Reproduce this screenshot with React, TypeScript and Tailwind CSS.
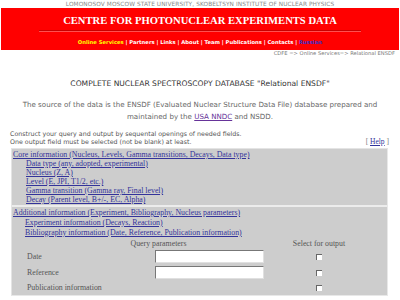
import React from "react";

export default function App() {
  const link = "text-[#33339a] underline decoration-[0.5px] underline-offset-[1px]";
  const inputCls =
    "w-[109px] h-[13px] bg-white border border-t-[#777] border-l-[#777] border-r-[#e0e0e0] border-b-[#e0e0e0] outline-none";
  const box = "w-[6px] h-[6px] bg-white border-t border-l border-t-[#666] border-l-[#666]";
  return (
    <div className="w-[400px] h-[300px] overflow-hidden bg-white flex flex-col">
      <div className="h-[8px] text-center text-[5.8px] leading-[8px] text-[#8a8a8a] [font-family:'DejaVu_Sans',sans-serif] tracking-[0.1px] whitespace-nowrap">
        LOMONOSOV MOSCOW STATE UNIVERSITY, SKOBELTSYN INSTITUTE OF NUCLEAR PHYSICS
      </div>
      <div className="mx-[1px] h-[42px] bg-[#ff0000] flex flex-col items-center">
        <div className="pt-[7px] text-[10.6px] leading-[12px] font-bold text-white [font-family:'Liberation_Serif',serif]">
          CENTRE FOR PHOTONUCLEAR EXPERIMENTS DATA
        </div>
        <div className="mt-[3px] w-[322px] h-[2px] border-t border-t-[#c80000] border-b border-b-[#ff5050]" />
        <div className="mt-[6px] text-[5.25px] leading-[8px] font-bold text-white [font-family:'DejaVu_Sans',sans-serif] whitespace-nowrap">
          <span className="text-[#ffff00]">Online Services</span>
          {" | Partners | Links | About | Team | Publications | Contacts | "}
          <span className="text-[#3333cc]">Russian</span>
        </div>
      </div>
      <div className="h-[7px] text-right pr-[5px] text-[5.2px] leading-[7px] text-[#777] [font-family:'DejaVu_Sans',sans-serif] whitespace-nowrap">
        CDFE =&gt; Online Services=&gt; Relational ENSDF
      </div>
      <div className="mt-[23px] text-center text-[7.6px] leading-[8px] text-[#333] [font-family:'DejaVu_Sans',sans-serif] whitespace-nowrap">
        COMPLETE NUCLEAR SPECTROSCOPY DATABASE "Relational ENSDF"
      </div>
      <div className="mt-[11px] text-center text-[7.1px] leading-[12px] text-[#666] [font-family:'DejaVu_Sans',sans-serif] whitespace-nowrap">
        The source of the data is the ENSDF (Evaluated Nuclear Structure Data File) database prepared and
        <br />
        maintained by the <span className="text-[#663399] underline">USA NNDC</span> and NSDD.
      </div>
      <div className="mt-[7px] mx-[10px] flex items-end justify-between">
        <div className="text-[6.3px] leading-[8px] text-[#555] [font-family:'DejaVu_Sans',sans-serif] whitespace-nowrap">
          Construct your query and output by sequental openings of needed fields.
          <br />
          One output field must be selected (not be blank) at least.
        </div>
        <div className="text-[7.5px] leading-[8px] text-[#777] [font-family:'Liberation_Serif',serif] mr-[1px]">
          [ <span className="text-[#33339a] underline">Help</span> ]
        </div>
      </div>
      <div className="mt-[2px] ml-[11px] w-[377px] h-[148px] bg-[#cdcdcd] border border-t-[#e4e4e4] border-l-[#e4e4e4] border-r-[#e8e8e8] border-b-[#e8e8e8] [font-family:'Liberation_Serif',serif] text-[7.85px] whitespace-nowrap">
        <div className="h-[56px] pt-[1px] pl-[1px] leading-[9px]">
          <div><span className={link}>Core information (Nucleus, Levels, Gamma transitions, Decays, Data type)</span></div>
          <div className="pl-[13px] flex flex-col">
            <span><span className={link}>Data type (any, adopted, experimental)</span></span>
            <span><span className={link}>Nucleus (Z, A)</span></span>
            <span><span className={link}>Level (E, JPI, T1/2, etc.)</span></span>
            <span><span className={link}>Gamma transition (Gamma ray, Final level)</span></span>
            <span><span className={link}>Decay (Parent level, B+/-, EC, Alpha)</span></span>
          </div>
        </div>
        <div className="h-[2px] bg-[#ececec]" />
        <div className="pt-[1px] pl-[1px] leading-[10px]">
          <div><span className={link}>Additional information (Experiment, Bibliography, Nucleus parameters)</span></div>
          <div className="pl-[12px] flex flex-col">
            <span><span className={link}>Experiment information (Decays, Reaction)</span></span>
            <span><span className={link}>Bibliography information (Date, Reference, Publication information)</span></span>
          </div>
          <div className="grid grid-cols-[128px_109px_26px_58px] pl-[14px] text-[#555] mt-[1px]">
            <div className="col-span-3 text-center leading-[10px]">Query parameters</div>
            <div className="text-center leading-[10px]">Select for output</div>

            <div className="h-[16px] flex items-center">Date</div>
            <div className="h-[16px] flex items-start pt-[1px]">
              <input className={inputCls} />
            </div>
            <div />
            <div className="h-[16px] flex items-center justify-center">
              <div className={box} />
            </div>

            <div className="h-[16px] flex items-center">Reference</div>
            <div className="h-[16px] flex items-start pt-[1px]">
              <input className={inputCls} />
            </div>
            <div />
            <div className="h-[16px] flex items-center justify-center">
              <div className={box} />
            </div>

            <div className="h-[14px] flex items-center">Publication information</div>
            <div />
            <div />
            <div className="h-[14px] flex items-center justify-center">
              <div className={box} />
            </div>
          </div>
        </div>
      </div>
    </div>
  );
}
